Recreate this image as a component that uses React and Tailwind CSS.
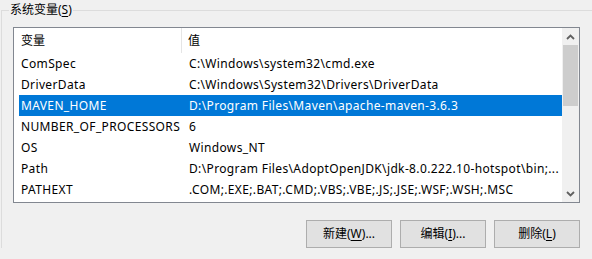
// System variables panel — list view with header, selected row, scrollbar, action buttons.

const FONT = "font-['Noto_Sans','Noto_Sans_CJK_SC',sans-serif]"

const ROWS = [
  ['ComSpec', 'C:\\Windows\\system32\\cmd.exe'],
  ['DriverData', 'C:\\Windows\\System32\\Drivers\\DriverData'],
  ['MAVEN_HOME', 'D:\\Program Files\\Maven\\apache-maven-3.6.3'],
  ['NUMBER_OF_PROCESSORS', '6'],
  ['OS', 'Windows_NT'],
  ['Path', 'D:\\Program Files\\AdoptOpenJDK\\jdk-8.0.222.10-hotspot\\bin;...'],
  ['PATHEXT', '.COM;.EXE;.BAT;.CMD;.VBS;.VBE;.JS;.JSE;.WSF;.WSH;.MSC'],
]

const SELECTED = 'MAVEN_HOME'

function Chevron({ up }) {
  return (
    <svg width="9" height="6" viewBox="0 0 9 6">
      <path
        d={up ? 'M1 5 L4.5 1.5 L8 5' : 'M1 1 L4.5 4.5 L8 1'}
        fill="none"
        stroke="#606060"
        strokeWidth="1.8"
      />
    </svg>
  )
}

function Row({ name, value }) {
  const sel = name === SELECTED
  return (
    <div
      className={`flex h-[21px] items-center ml-[5px] tracking-[0.36px] leading-normal whitespace-nowrap ${sel ? 'bg-[#0078d7] text-white' : 'text-black'}`}
    >
      <div className="w-[163px] shrink-0 pl-[2px]">{name}</div>
      <div className="pl-[7px]">{value}</div>
    </div>
  )
}

function Button({ label, mnemonic, suffix }) {
  return (
    <button className="w-[86px] h-[28px] bg-[#e1e1e1] border border-[#adadad] text-[12px] leading-normal text-black flex items-center justify-center">
      {label}(<span className="underline underline-offset-2">{mnemonic}</span>){suffix}
    </button>
  )
}

export default function App() {
  return (
    <div className={`w-[592px] h-[259px] bg-[#f0f0f0] overflow-hidden text-[12px] leading-normal ${FONT}`}>
      {/* Group box */}
      <div className="relative mt-[10px] ml-[1px] border-l border-t border-[#dcdcdc] pt-[16px] pl-[11px]">
        <span className="absolute -top-[9px] left-[7px] bg-[#f0f0f0] px-[1px] leading-[16px] text-black">
          系统变量(<span className="underline underline-offset-2">S</span>)
        </span>

        {/* List view */}
        <div className="w-[567px] h-[176px] border border-[#828790] bg-white flex overflow-hidden">
          <div className="flex-1 min-w-0">
            {/* Header */}
            <div className="flex h-[25px] items-center text-black">
              <div className="w-[168px] h-full pl-[7px] flex items-center border-r border-[#e5e5e5]">变量</div>
              <div className="pl-[6px]">值</div>
            </div>
            {ROWS.map(([n, v]) => (
              <Row key={n} name={n} value={v} />
            ))}
          </div>

          {/* Scrollbar */}
          <div className="w-[17px] shrink-0 bg-[#f0f0f0] flex flex-col items-center">
            <div className="h-[17px] flex items-center justify-center">
              <Chevron up />
            </div>
            <div className="w-[15px] h-[61px] bg-[#cdcdcd]" />
            <div className="flex-1" />
            <div className="h-[17px] flex items-center justify-center">
              <Chevron />
            </div>
          </div>
        </div>

        {/* Buttons */}
        <div className="flex justify-end gap-[8px] w-[567px] mt-[17px] mb-[20px]">
          <Button label="新建" mnemonic="W" suffix="..." />
          <Button label="编辑" mnemonic="I" suffix="..." />
          <Button label="删除" mnemonic="L" suffix="" />
        </div>
      </div>
    </div>
  )
}
